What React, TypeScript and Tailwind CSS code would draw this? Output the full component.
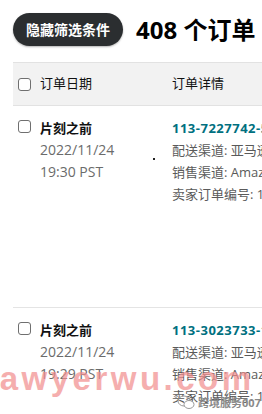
import React from "react";

const FONT = { fontFamily: '"Open Sans", "Noto Sans CJK SC", sans-serif' };

interface Order {
  id: string;
  time: string;
}

const ORDERS: Order[] = [
  { id: "113-7227742-5563417", time: "19:30 PST" },
  { id: "113-3023733-1183400", time: "19:29 PST" },
];

function Box() {
  return <span className="mt-[1px] block h-[13px] w-[13px] shrink-0 rounded-[3px] border border-[#6f6f6f] bg-white" />;
}

function Row({ order, tall }: { order: Order; tall: boolean }) {
  return (
    <div className={`flex border-b border-[#e4e4e4] pt-[11px] ${tall ? "h-[202px]" : "h-[120px]"}`}>
      <div className="flex w-[159px] shrink-0 gap-[9px] pl-[5px]">
        <div className="pt-[2px]">
          <Box />
        </div>
        <div className="relative flex-1 text-[13px] leading-[22px]">
          <p className="font-bold text-[#111]">片刻之前</p>
          <p className="text-[14px] text-[#6b6b6b]">2022/11/24</p>
          <p className="text-[14px] text-[#6b6b6b]">{order.time}</p>
          {tall && <span className="absolute left-[113px] top-[41px] h-[2px] w-[2px] bg-[#222]" />}
        </div>
      </div>
      <div className="flex-1 whitespace-nowrap text-[13px] leading-[22px] text-[#5a5a5a]">
        <p className="font-bold tracking-[0.5px] text-[#007080]">{order.id}</p>
        <p>配送渠道: 亚马逊</p>
        <p>销售渠道: Amazon.com</p>
        <p>卖家订单编号: 113-7227742</p>
      </div>
    </div>
  );
}

export default function App() {
  return (
    <div className="relative h-[414px] w-[262px] overflow-hidden bg-white" style={FONT}>
      <div className="flex items-center gap-[13px] pl-[13px] pt-[13px]">
        <button
          type="button"
          className="h-[33px] w-[110px] shrink-0 rounded-full bg-[#2b2e30] text-[14px] font-bold text-white shadow-[0_1px_2px_rgba(0,0,0,0.3)]"
        >
          隐藏筛选条件
        </button>
        <h1 className="whitespace-nowrap text-[24px] font-bold leading-none text-black">408 个订单</h1>
      </div>

      <div className="ml-[13px] mt-[16px] w-[400px]">
        <div className="flex h-[44px] items-center border-y border-[#e2e2e2] bg-[#f2f2f2] text-[13px] text-[#111]">
          <div className="flex w-[159px] shrink-0 items-center gap-[9px] pl-[5px]">
            <Box />
            <span>订单日期</span>
          </div>
          <span>订单详情</span>
        </div>
        {ORDERS.map((o, i) => (
          <Row key={o.id} order={o} tall={i === 0} />
        ))}
      </div>

      {/* watermark */}
      <div
        className="pointer-events-none absolute left-[-13px] top-[362px] whitespace-nowrap text-[33px] font-bold leading-none tracking-[3.5px] text-[#f28d8d] opacity-70"
        style={{ fontFamily: '"Liberation Sans", sans-serif' }}
      >
        lawyerwu.com
      </div>
      <div className="pointer-events-none absolute left-[177px] top-[395px] flex items-center gap-[3px]">
        <svg width="18" height="15" viewBox="0 0 18 15" fill="none" stroke="#9a9a9a" strokeWidth="1">
          <ellipse cx="7" cy="6" rx="6" ry="5" />
          <ellipse cx="12" cy="9.5" rx="5" ry="4" fill="white" />
        </svg>
        <span className="text-[11px] font-bold leading-none text-[#8a8a8a]">跨境服务007</span>
      </div>
    </div>
  );
}
